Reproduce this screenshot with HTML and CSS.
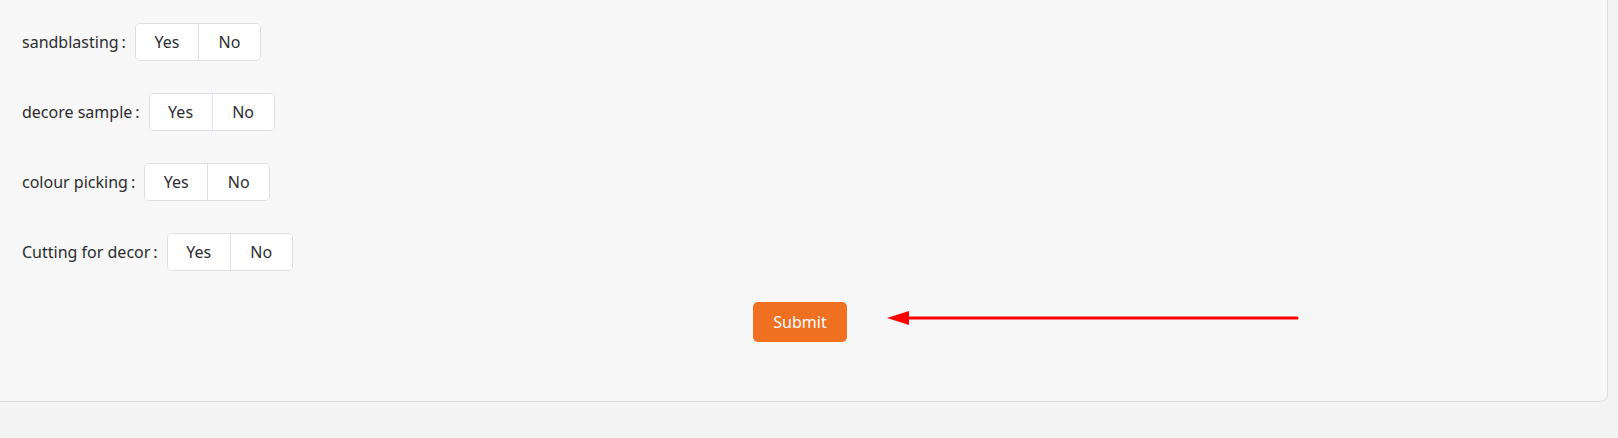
FILE: index.html
```html
<!DOCTYPE html>
<html lang="en">
<head>
<meta charset="utf-8">
<title>Form</title>
<link rel="stylesheet" href="styles.css">
</head>
<body>
<div class="card">
  <form class="form">
    <div class="row">
      <span class="label">sandblasting<span class="colon">:</span></span>
      <div class="group"><button type="button" class="opt">Yes</button><button type="button" class="opt">No</button></div>
    </div>
    <div class="row">
      <span class="label">decore sample<span class="colon">:</span></span>
      <div class="group"><button type="button" class="opt">Yes</button><button type="button" class="opt">No</button></div>
    </div>
    <div class="row">
      <span class="label">colour picking<span class="colon">:</span></span>
      <div class="group"><button type="button" class="opt">Yes</button><button type="button" class="opt">No</button></div>
    </div>
    <div class="row">
      <span class="label">Cutting for decor<span class="colon">:</span></span>
      <div class="group"><button type="button" class="opt">Yes</button><button type="button" class="opt">No</button></div>
    </div>
    <div class="actions">
      <button type="button" class="submit">Submit</button>
    </div>
  </form>
</div>
<svg class="arrow" width="420" height="20" viewBox="0 0 420 20">
  <line x1="20" y1="10" x2="410" y2="10" stroke="#ff0000" stroke-width="3.2" stroke-linecap="round"/>
  <polygon points="0,10 22,3 22,17" fill="#ff0000"/>
</svg>
</body>
</html>
```

FILE: styles.css
```css
html, body {
  margin: 0;
  padding: 0;
}
body {
  background: #f3f3f3;
  font-family: "Noto Sans", "Open Sans", sans-serif;
  color: #303133;
  height: 438px;
  overflow: hidden;
  position: relative;
}
.card {
  background: #f7f7f7;
  border: 1px solid #dcdcdc;
  border-radius: 8px;
  margin: -20px 10px 0 -20px;
  padding: 42px 0 59px 41px;
}
.form {
  display: flex;
  flex-direction: column;
  gap: 32px;
}
.row {
  display: flex;
  align-items: center;
  height: 38px;
}
.label {
  font-size: 16px;
  line-height: 38px;
  padding-right: 9px;
  white-space: nowrap;
  color: #2b2d30;
}
.colon {
  margin-left: 3px;
}
.group {
  display: flex;
  border: 1px solid #dcdfe6;
  border-radius: 5px;
  background: #ffffff;
  height: 36px;
  overflow: hidden;
}
.opt {
  width: 62px;
  height: 36px;
  border: none;
  background: #ffffff;
  font-family: inherit;
  font-size: 16px;
  color: #2b2d30;
  padding: 0;
}
.opt + .opt {
  border-left: 1px solid #dcdfe6;
}
.actions {
  display: flex;
  justify-content: center;
  padding-right: 29px;
  margin-top: -1px;
}
.submit {
  width: 94px;
  height: 40px;
  border: none;
  border-radius: 5px;
  background: #f07022;
  color: #ffffff;
  font-family: inherit;
  font-size: 16px;
  padding: 0;
}
.arrow {
  position: absolute;
  left: 887px;
  top: 308px;
}
```
